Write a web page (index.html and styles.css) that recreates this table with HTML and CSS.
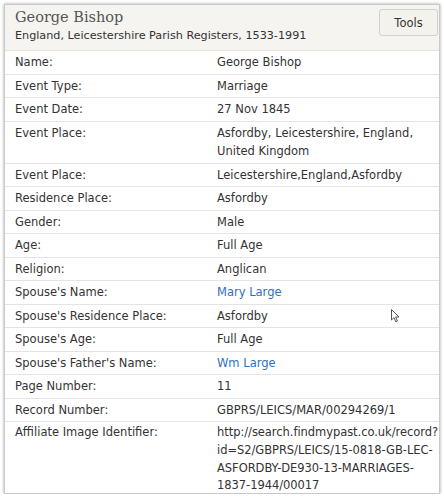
FILE: index.html
```html
<!DOCTYPE html>
<html>
<head>
<meta charset="utf-8">
<link rel="stylesheet" href="styles.css">
</head>
<body>
<div class="card">
  <div class="header">
    <div class="titles">
      <div class="title">George Bishop</div>
      <div class="subtitle">England, Leicestershire Parish Registers, 1533-1991</div>
    </div>
    <button class="tools">Tools</button>
  </div>
  <div class="rows">
    <div class="row"><div class="label">Name:</div><div class="value">George Bishop</div></div>
    <div class="row"><div class="label">Event Type:</div><div class="value">Marriage</div></div>
    <div class="row"><div class="label">Event Date:</div><div class="value">27 Nov 1845</div></div>
    <div class="row"><div class="label">Event Place:</div><div class="value">Asfordby, Leicestershire, England, United Kingdom</div></div>
    <div class="row"><div class="label">Event Place:</div><div class="value">Leicestershire,England,Asfordby</div></div>
    <div class="row"><div class="label">Residence Place:</div><div class="value">Asfordby</div></div>
    <div class="row"><div class="label">Gender:</div><div class="value">Male</div></div>
    <div class="row"><div class="label">Age:</div><div class="value">Full Age</div></div>
    <div class="row"><div class="label">Religion:</div><div class="value">Anglican</div></div>
    <div class="row"><div class="label">Spouse's Name:</div><div class="value"><a class="link" href="#">Mary Large</a></div></div>
    <div class="row cursor-row"><div class="label">Spouse's Residence Place:</div><div class="value">Asfordby</div>
      <svg class="cursor" width="9" height="14" viewBox="0 0 9 14"><path d="M0.5 0.5 L0.5 11 L3 8.6 L4.8 12.8 L6.4 12.1 L4.7 8 L8 8 Z" fill="#fff" stroke="#555" stroke-width="1" stroke-linejoin="round"/></svg>
    </div>
    <div class="row"><div class="label">Spouse's Age:</div><div class="value">Full Age</div></div>
    <div class="row"><div class="label">Spouse's Father's Name:</div><div class="value"><a class="link" href="#">Wm Large</a></div></div>
    <div class="row"><div class="label">Page Number:</div><div class="value">11</div></div>
    <div class="row"><div class="label">Record Number:</div><div class="value">GBPRS/LEICS/MAR/00294269/1</div></div>
    <div class="row last"><div class="label">Affiliate Image Identifier:</div><div class="value">http://search.findmypast.co.uk/record?<br>id=S2/GBPRS/LEICS/15-0818-GB-LEC-<br>ASFORDBY-DE930-13-MARRIAGES-<br>1837-1944/00017</div></div>
  </div>
</div>
</body>
</html>
```
FILE: styles.css
```css
* { box-sizing: border-box; }
html, body { margin: 0; padding: 0; background: #fff; }
body {
  font-family: "DejaVu Sans", Verdana, sans-serif;
  font-size: 11.5px;
  color: #333;
  padding: 4px 4px 0 4px;
}
.card {
  width: 436px;
  height: 490px;
  overflow: hidden;
  border: 1px solid #c9c9c9;
  box-shadow: 0 0 3px rgba(0,0,0,0.35);
  background: #fff;
}
.header {
  display: flex;
  justify-content: space-between;
  align-items: flex-start;
  background: #f6f4f1;
  border-bottom: 1px solid #e6e3de;
  padding: 4px 1px 0 10px;
  height: 46px;
}
.title {
  font-family: "DejaVu Serif", serif;
  font-size: 14.5px;
  color: #555;
  line-height: 17px;
}
.subtitle {
  font-size: 11.2px;
  color: #333;
  line-height: 19px;
}
.tools {
  width: 59px;
  height: 27px;
  font-family: "DejaVu Sans", Verdana, sans-serif;
  font-size: 11.5px;
  color: #333;
  background: #f4f2ed;
  border: 1px solid #d3d0ca;
  border-radius: 3px;
  padding: 0;
}
.row {
  display: grid;
  grid-template-columns: 202px 1fr;
  border-bottom: 1px solid #e4e4e4;
  padding: 2px 0 2px;
  line-height: 18.5px;
}
.row.last { border-bottom: none; line-height: 17.8px; }
.label { padding-left: 10px; }
.value { padding-left: 10px; padding-right: 0; }
.row.last .value { white-space: nowrap; letter-spacing: -0.05px; }
.link { color: #2f6fc6; text-decoration: none; }
.cursor-row { position: relative; }
.cursor { position: absolute; left: 386px; top: 4px; }
```
